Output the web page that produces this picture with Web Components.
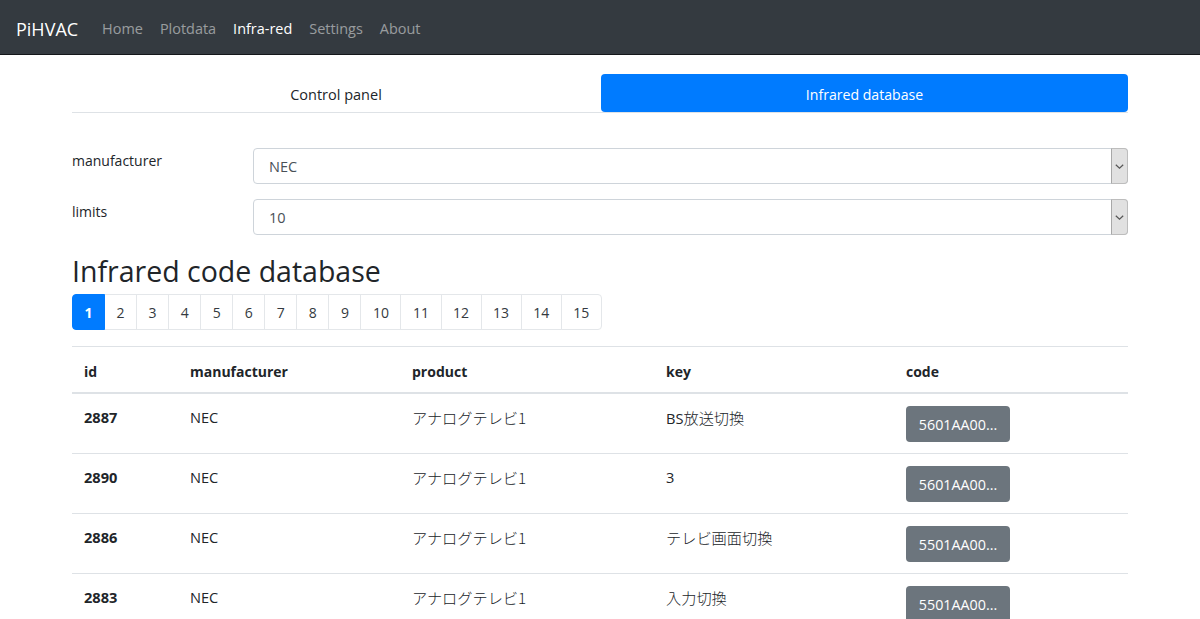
<!DOCTYPE html>
<html lang="ja">
<head>
<meta charset="utf-8">
<title>PiHVAC</title>
<style>
  html, body { margin: 0; height: 619px; overflow: hidden; background: #fff; }
  body { font: 14px/24px "Open Sans", "Noto Sans CJK JP", sans-serif; color: #212529; }
  .ja { font-family: "Noto Sans CJK JP", sans-serif; font-size: 15.2px; font-weight: 300; }
  .t { font-size: 14.6px; }
</style>
</head>
<body>
<pi-navbar>
  <span slot="brand">PiHVAC</span>
  <nav-link>Home</nav-link>
  <nav-link>Plotdata</nav-link>
  <nav-link active>Infra-red</nav-link>
  <nav-link>Settings</nav-link>
  <nav-link>About</nav-link>
</pi-navbar>
<pi-page>
  <pi-tabs>
    <pi-tab>Control panel</pi-tab>
    <pi-tab active>Infrared database</pi-tab>
  </pi-tabs>
  <pi-field label="manufacturer">NEC</pi-field>
  <pi-field label="limits">10</pi-field>
  <pi-heading>Infrared code database</pi-heading>
  <pi-pagination pages="15" current="1"></pi-pagination>
  <ir-table>
    <ir-row head><span>id</span><span>manufacturer</span><span>product</span><span>key</span><span>code</span></ir-row>
    <ir-row><span class="t">2887</span><span class="t">NEC</span><span class="ja">アナログテレビ1</span><span class="t">BS<span class="ja">放送切換</span></span><ir-code>5601AA00...</ir-code></ir-row>
    <ir-row><span class="t">2890</span><span class="t">NEC</span><span class="ja">アナログテレビ1</span><span class="t">3</span><ir-code>5601AA00...</ir-code></ir-row>
    <ir-row><span class="t">2886</span><span class="t">NEC</span><span class="ja">アナログテレビ1</span><span class="ja">テレビ画面切換</span><ir-code>5501AA00...</ir-code></ir-row>
    <ir-row><span class="t">2883</span><span class="t">NEC</span><span class="ja">アナログテレビ1</span><span class="ja">入力切換</span><ir-code>5501AA00...</ir-code></ir-row>
  </ir-table>
</pi-page>
<script>
function shadow(el, html) {
  el.attachShadow({ mode: "open" }).innerHTML = html;
}

customElements.define("pi-navbar", class extends HTMLElement {
  constructor() {
    super();
    shadow(this, /*html*/ `
      <style>
        :host {
          display: flex;
          align-items: center;
          box-sizing: border-box;
          height: 55px;
          padding: 4px 16px 0;
          background: #343a40;
          border-bottom: 1px solid #14171a;
        }
        .brand { font-size: 18px; color: #fff; margin-right: 24px; }
        nav { display: flex; gap: 17px; font-size: 14.45px; }
      </style>
      <div class="brand"><slot name="brand"></slot></div>
      <nav><slot></slot></nav>
    `);
  }
});

customElements.define("nav-link", class extends HTMLElement {
  constructor() {
    super();
    shadow(this, /*html*/ `
      <style>
        :host { display: block; color: rgba(255,255,255,.5); }
        :host([active]) { color: #fff; }
      </style>
      <slot></slot>
    `);
  }
});

customElements.define("pi-page", class extends HTMLElement {
  constructor() {
    super();
    shadow(this, /*html*/ `
      <style>
        :host { display: block; padding: 19px 72px 0; }
      </style>
      <slot></slot>
    `);
  }
});

customElements.define("pi-tabs", class extends HTMLElement {
  constructor() {
    super();
    shadow(this, /*html*/ `
      <style>
        :host {
          display: grid;
          grid-template-columns: 1fr 1fr;
          height: 39px;
          box-sizing: border-box;
          border-bottom: 1px solid #dee2e6;
          margin-bottom: 35px;
        }
      </style>
      <slot></slot>
    `);
  }
});

customElements.define("pi-tab", class extends HTMLElement {
  constructor() {
    super();
    shadow(this, /*html*/ `
      <style>
        :host { display: flex; align-items: center; justify-content: center; padding-top: 4px; font-size: 14.5px; }
        :host([active]) { background: #007bff; color: #fff; border-radius: 4px; margin-left: 1px; font-size: 14.1px; }
      </style>
      <slot></slot>
    `);
  }
});

customElements.define("pi-field", class extends HTMLElement {
  constructor() {
    super();
    shadow(this, /*html*/ `
      <style>
        :host {
          display: grid;
          grid-template-columns: 181px 1fr;
          margin-bottom: 15px;
        }
        label { padding-top: 1px; }
        .select {
          display: flex;
          align-items: center;
          box-sizing: border-box;
          height: 36px;
          padding-left: 15px;
          border: 1px solid #ced4da;
          border-radius: 4px;
          color: #495057;
          font-size: 14.5px;
        }
        .value { flex: 1; padding-top: 2px; }
        .arrow {
          display: flex;
          align-items: center;
          justify-content: center;
          box-sizing: border-box;
          width: 17px;
          height: 36px;
          margin-right: -1px;
          background: #e1e1e1;
          border: 1px solid #bdbdbd;
          border-left-color: #a8a8a8;
          border-radius: 0 4px 4px 0;
        }
      </style>
      <label></label>
      <div class="select">
        <div class="value"><slot></slot></div>
        <div class="arrow">
          <svg width="9" height="5" viewBox="0 0 9 5"><path d="M.8.7l3.7 3.4L8.2.7" fill="none" stroke="#555" stroke-width="1.2"/></svg>
        </div>
      </div>
    `);
    this.shadowRoot.querySelector("label").textContent = this.getAttribute("label");
  }
});

customElements.define("pi-heading", class extends HTMLElement {
  constructor() {
    super();
    shadow(this, /*html*/ `
      <style>
        :host { display: block; font-size: 28.5px; line-height: 38px; margin-top: 17px; margin-bottom: 4px; }
      </style>
      <slot></slot>
    `);
  }
});

customElements.define("pi-pagination", class extends HTMLElement {
  constructor() {
    super();
    const pages = Number(this.getAttribute("pages"));
    const current = Number(this.getAttribute("current"));
    let items = "";
    for (let n = 1; n <= pages; n++) {
      items += `<a class="${n === current ? "active" : ""}">${n}</a>`;
    }
    shadow(this, /*html*/ `
      <style>
        :host { display: flex; height: 36px; margin-bottom: 16px; }
        a {
          box-sizing: border-box;
          height: 36px;
          padding: 0 11.53px;
          margin-left: -1px;
          line-height: 35px;
          border: 1px solid #e4e7ea;
          background: #fff;
          color: #343a40;
        }
        a:first-of-type { margin-left: 0; border-radius: 4px 0 0 4px; }
        a:last-of-type { border-radius: 0 4px 4px 0; }
        a.active { background: #007bff; border-color: #007bff; color: #fff; font-weight: 700; position: relative; }
      </style>
      ${items}
    `);
  }
});

customElements.define("ir-table", class extends HTMLElement {
  constructor() {
    super();
    shadow(this, /*html*/ `
      <style>
        :host { display: block; border-top: 1px solid #dee2e6; }
      </style>
      <slot></slot>
    `);
  }
});

customElements.define("ir-row", class extends HTMLElement {
  constructor() {
    super();
    shadow(this, /*html*/ `
      <style>
        :host {
          display: grid;
          grid-template-columns: 106px 222px 254px 240px 1fr;
          align-items: start;
          box-sizing: border-box;
          height: 60px;
          padding-top: 12px;
          border-bottom: 1px solid #dee2e6;
          color: #212529;
        }
        :host([head]) {
          height: 47px;
          padding-top: 14px;
          border-bottom-width: 2px;
          font-weight: 700;
        }
        ::slotted(*) { margin: -1px 0 0 12px; }
        ::slotted(ir-code) { margin-top: 0; }
        ::slotted(:first-child) { font-weight: 700; }
      </style>
      <slot></slot>
    `);
  }
});

customElements.define("ir-code", class extends HTMLElement {
  constructor() {
    super();
    shadow(this, /*html*/ `
      <style>
        :host {
          display: block;
          box-sizing: border-box;
          width: 104px;
          height: 36px;
          line-height: 37px;
          text-align: center;
          white-space: nowrap;
          font-size: 14.3px;
          background: #6c757d;
          color: #fff;
          border-radius: 4px;
        }
      </style>
      <slot></slot>
    `);
  }
});
</script>
</body>
</html>
